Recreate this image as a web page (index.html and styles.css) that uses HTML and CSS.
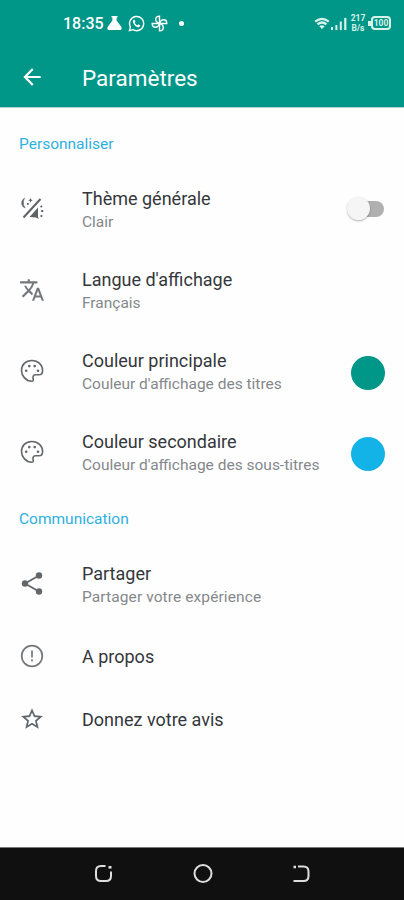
FILE: index.html
```html
<!DOCTYPE html>
<html lang="fr">
<head>
  <meta charset="UTF-8">
  <meta name="viewport" content="width=device-width, initial-scale=1.0">
  <title>Paramètres</title>
  <link rel="stylesheet" href="styles.css">
</head>
<body>
  <header class="header">
    <div class="status-bar">
      <span class="clock">18:35</span>
      <svg class="flask" width="15" height="16" viewBox="0 0 15 16"><path d="M4.500 1h6v1.600H9.600v3L14.400 12q.8 3-1.400 3H2Q-.2 15 .6 12L5.400 5.600V2.600H4.500z" fill="#fff"/></svg>
      <svg class="whatsapp" width="17" height="17" viewBox="0 0 24 24"><path d="M2 22l1.400-5.100A10 10 0 1 1 7.100 20.700z" fill="none" stroke="#fff" stroke-width="2"/><path d="M7 8c.4-1 1.300-1.700 2.200-1.300L10.500 9.500l-1 1.300c.8 1.700 2 2.900 3.800 3.700l1.400-1.300 2.600 1.300c.3 1.300-1 2.600-2.300 2.800C11 17.300 6.500 12 7 8z" fill="#fff"/></svg>
      <svg class="fan" width="17" height="17" viewBox="0 0 17 17" fill="none" stroke="#fff" stroke-width="1.400">
        <path d="M8.500 8.500V1.200C3.500 1.200 3.500 7 8.500 8.500z"/>
        <path d="M8.500 8.500h7.300c0-5-5.800-5-7.300 0z"/>
        <path d="M8.500 8.500v7.300c5 0 5-5.800 0-7.300z"/>
        <path d="M8.500 8.500H1.200c0 5 5.800 5 7.300 0z"/>
      </svg>
      <span class="dot"></span>
      <div class="status-right">
        <svg class="wifi" width="16" height="13" viewBox="0 0 16 13" fill="none" stroke="#d8f3ea" stroke-width="2.200"><path d="M1.200 4.600q6.800-5.600 13.600 0M3.500 7.300q4.500-3.600 9 0"/><path d="M5.300 9.200q2.700-1.800 5.400 0L8 12z" fill="#d8f3ea" stroke="none"/></svg>
        <svg class="signal" width="16" height="13" viewBox="0 0 16 13" fill="#d8f3ea"><path d="M0 10h2v3H0zM4.400 8h2v5h-2zM8.800 4.500h2V13h-2zM13.200 1h2.200v12h-2.200z"/></svg>
        <span class="speed"><span>217</span><span>B/s</span></span>
        <span class="battery">100</span>
      </div>
    </div>
    <div class="toolbar">
      <svg class="back" width="26" height="26" viewBox="0 0 24 24"><path d="M20 11H7.830l5.590-5.590L12 4l-8 8 8 8 1.410-1.410L7.830 13H20z" fill="#fff"/></svg>
      <h1>Paramètres</h1>
    </div>
  </header>

  <main class="settings">
    <h2 class="category">Personnaliser</h2>

    <div class="row">
      <svg class="icon" width="26" height="26" viewBox="0 0 26 26">
        <path d="M4.500 21.500L21.500 3" stroke="#5f6368" stroke-width="2"/>
        <path d="M5.500 2.200c-4 2.500-3.600 8 .5 9.800-2-3.200-2.300-6.500-.5-9.800z" fill="#5f6368" stroke="#5f6368" stroke-width=".6"/>
        <path d="M11.500 2l.7 1.500 1.500.7-1.500.7-.7 1.500-.7-1.500-1.500-.7 1.500-.7zM8 7h1.800v1.800H8z" fill="#5f6368"/>
        <path d="M10.500 21l8.500-9.500V21l1 2-3-1.500z" fill="#5f6368"/>
        <path d="M21.500 11l1.600-1M22.200 15h2M21.500 19.500l1.800 1" stroke="#5f6368" stroke-width="1.800"/>
      </svg>
      <div class="label">
        <span class="title">Thème générale</span>
        <span class="summary">Clair</span>
      </div>
      <span class="switch"></span>
    </div>

    <div class="row">
      <svg class="icon" width="26" height="26" viewBox="0 0 24 24"><path d="M12.870 15.070l-2.540-2.510.03-.03A17.520 17.520 0 0 0 14.070 6H17V4h-7V2H8v2H1v1.990h11.170C11.500 7.920 10.440 9.750 9 11.350 8.070 10.320 7.300 9.190 6.690 8h-2c.73 1.630 1.730 3.170 2.980 4.560l-5.090 5.020L4 19l5-5 3.110 3.110.76-2.040zM18.500 10h-2L12 22h2l1.120-3h4.750L21 22h2l-4.500-12zm-2.620 7l1.620-4.330L19.120 17h-3.240z" fill="#74787c"/></svg>
      <div class="label">
        <span class="title">Langue d'affichage</span>
        <span class="summary">Français</span>
      </div>
    </div>

    <div class="row">
      <svg class="icon" width="26" height="26" viewBox="0 0 26 26">
        <path d="M13 2.500C6.500 2.500 2.500 7 2.500 12.500c0 5.500 4.500 10.700 10.200 10.700 1.400 0 1.800-1 1.500-2.100-.4-1.800-.6-4.300 2.300-4.300h3.200c2.500 0 3.900-1.800 3.900-4.400C23.600 6.700 19 2.500 13 2.500z" fill="none" stroke="#62676b" stroke-width="1.600"/>
        <g fill="#62676b"><circle cx="7.200" cy="12.700" r="1.300"/><circle cx="10.300" cy="8.100" r="1.300"/><circle cx="15.700" cy="8.100" r="1.300"/><circle cx="19" cy="12.700" r="1.300"/></g>
      </svg>
      <div class="label">
        <span class="title">Couleur principale</span>
        <span class="summary">Couleur d'affichage des titres</span>
      </div>
      <span class="swatch primary"></span>
    </div>

    <div class="row">
      <svg class="icon" width="26" height="26" viewBox="0 0 26 26">
        <path d="M13 2.500C6.500 2.500 2.500 7 2.500 12.500c0 5.500 4.500 10.700 10.200 10.700 1.400 0 1.800-1 1.500-2.100-.4-1.800-.6-4.300 2.300-4.300h3.200c2.500 0 3.900-1.800 3.900-4.400C23.600 6.700 19 2.500 13 2.500z" fill="none" stroke="#62676b" stroke-width="1.600"/>
        <g fill="#62676b"><circle cx="7.200" cy="12.700" r="1.300"/><circle cx="10.300" cy="8.100" r="1.300"/><circle cx="15.700" cy="8.100" r="1.300"/><circle cx="19" cy="12.700" r="1.300"/></g>
      </svg>
      <div class="label">
        <span class="title">Couleur secondaire</span>
        <span class="summary">Couleur d'affichage des sous-titres</span>
      </div>
      <span class="swatch secondary"></span>
    </div>

    <h2 class="category communication">Communication</h2>

    <div class="row">
      <svg class="icon" width="26" height="26" viewBox="0 0 26 26"><path d="M20 4.500l-14 8 14 8" fill="none" stroke="#62676b" stroke-width="1.800"/><g fill="#62676b"><circle cx="20" cy="4.500" r="3.200"/><circle cx="6" cy="12.500" r="3.200"/><circle cx="20" cy="20.500" r="3.200"/></g></svg>
      <div class="label">
        <span class="title">Partager</span>
        <span class="summary spaced">Partager votre expérience</span>
      </div>
    </div>

    <div class="row single">
      <svg class="icon" width="26" height="26" viewBox="0 0 26 26"><circle cx="13" cy="13" r="10.300" fill="none" stroke="#74787c" stroke-width="1.700"/><path d="M13 7.500v7M13 16.300v2.200" stroke="#8a8d90" stroke-width="2"/></svg>
      <div class="label">
        <span class="title">A propos</span>
      </div>
    </div>

    <div class="row single">
      <svg class="icon" width="26" height="26" viewBox="0 0 24 24"><path d="M22 9.240l-7.190-.62L12 2 9.190 8.630 2 9.240l5.460 4.730L5.820 21 12 17.270 18.180 21l-1.630-7.030L22 9.240zM12 15.400l-3.760 2.270 1-4.280-3.320-2.880 4.380-.38L12 6.100l1.710 4.040 4.380.38-3.320 2.880 1 4.280L12 15.400z" fill="#62676b"/></svg>
      <div class="label">
        <span class="title">Donnez votre avis</span>
      </div>
    </div>
  </main>

  <nav class="navbar">
    <svg width="20" height="20" viewBox="0 0 20 20" fill="none" stroke="#dedede" stroke-width="2"><path d="M11.500 2H7Q2 2 2 7v5q0 5 5 5h5q5 0 5-5V7.500"/><path d="M14.500 3.300h3" stroke-width="2.600"/></svg>
    <svg width="20" height="20" viewBox="0 0 20 20" fill="none" stroke="#dedede" stroke-width="2"><circle cx="10" cy="9.500" r="8.500"/></svg>
    <svg width="20" height="20" viewBox="0 0 20 20" fill="none" stroke="#dedede" stroke-width="2"><path d="M6 2.500h5.500q5 0 5 5V12q0 5-5 5H1.500"/><path d="M1.500 3h2.500" stroke-width="2.600"/></svg>
  </nav>
</body>
</html>
```
FILE: styles.css
```css
body {
  margin: 0;
  height: 900px;
  display: flex;
  flex-direction: column;
  background-color: #fefefe;
  font-family: Roboto, sans-serif;
  overflow: hidden;
}

/* Header */
.header {
  height: 107px;
  background-color: #009688;
  border-bottom: 1px solid #a9d3cc;
  color: #fff;
}
.status-bar {
  display: flex;
  align-items: center;
  height: 46px;
  padding-right: 13px;
  padding-left: 63px;
}
.clock {
  width: 44px;
  font-size: 16px;
  font-weight: 500;
}
.whatsapp {
  margin-left: 6px;
}
.fan {
  margin-left: 6px;
}
.dot {
  width: 5px;
  height: 5px;
  margin-left: 11px;
  border-radius: 50%;
  background-color: #fff;
}
.status-right {
  display: flex;
  align-items: center;
  margin-left: auto;
  color: #d8f3ea;
}
.wifi {
  margin-right: -1px;
}
.signal {
  margin-left: 2px;
}
.speed {
  display: flex;
  flex-direction: column;
  width: 16px;
  margin-left: 3px;
  font-size: 8.5px;
  line-height: 10px;
  font-weight: 700;
  text-align: center;
}
.battery {
  position: relative;
  width: 16px;
  height: 10px;
  margin-left: 5px;
  border: 2px solid #d8f3ea;
  border-radius: 4px;
  font-size: 8.5px;
  line-height: 10px;
  font-weight: 700;
  text-align: center;
}
.battery::before {
  content: '';
  position: absolute;
  top: 3px;
  left: -5px;
  width: 3px;
  height: 5px;
  background-color: #d8f3ea;
}
.toolbar {
  display: flex;
  align-items: center;
  height: 62px;
  padding-left: 19px;
}
.toolbar h1 {
  margin: 2px 0 0 37px;
  font-size: 22.5px;
  font-weight: 400;
}

/* Settings list */
.settings {
  flex: 1;
}
.category {
  display: flex;
  align-items: center;
  height: 50px;
  margin: 0;
  padding: 11px 0 0 19px;
  font-size: 15.5px;
  font-weight: 400;
  color: #2fb0de;
}
.category.communication {
  height: 51px;
  padding-top: 0;
}
.row {
  display: flex;
  align-items: center;
  height: 81px;
  padding: 0 19px;
}
.row.single {
  height: 63px;
}
.icon {
  flex: none;
  margin-top: -1px;
}
.single .icon {
  margin-top: -2px;
}
.label {
  display: flex;
  flex-direction: column;
  flex: 1;
  margin-left: 37px;
  white-space: nowrap;
}
.title {
  font-size: 18px;
  line-height: 24px;
  color: #34373b;
}
.summary {
  font-size: 15.5px;
  line-height: 22px;
  color: #85888b;
}
.summary.spaced {
  letter-spacing: 0.1px;
}
.swatch {
  width: 34px;
  height: 34px;
  margin-top: 2px;
  border-radius: 50%;
}
.primary {
  background-color: #009688;
}
.secondary {
  background-color: #13b3e8;
}
.switch {
  position: relative;
  width: 30px;
  height: 16px;
  margin-top: -2px;
  margin-right: 1px;
  border-radius: 8px;
  background-color: #b0b0b0;
}
.switch::before {
  content: '';
  position: absolute;
  top: -4px;
  left: -7px;
  width: 23px;
  height: 23px;
  border-radius: 50%;
  background-color: #f5f5f5;
  box-shadow: 0 1px 2px rgba(0, 0, 0, 0.3);
}

/* Navigation buttons */
.navbar {
  display: flex;
  align-items: center;
  justify-content: center;
  gap: 79px;
  height: 52px;
  padding-left: 1px;
  border-top: 1px solid #777;
  background-color: #101010;
}
```
